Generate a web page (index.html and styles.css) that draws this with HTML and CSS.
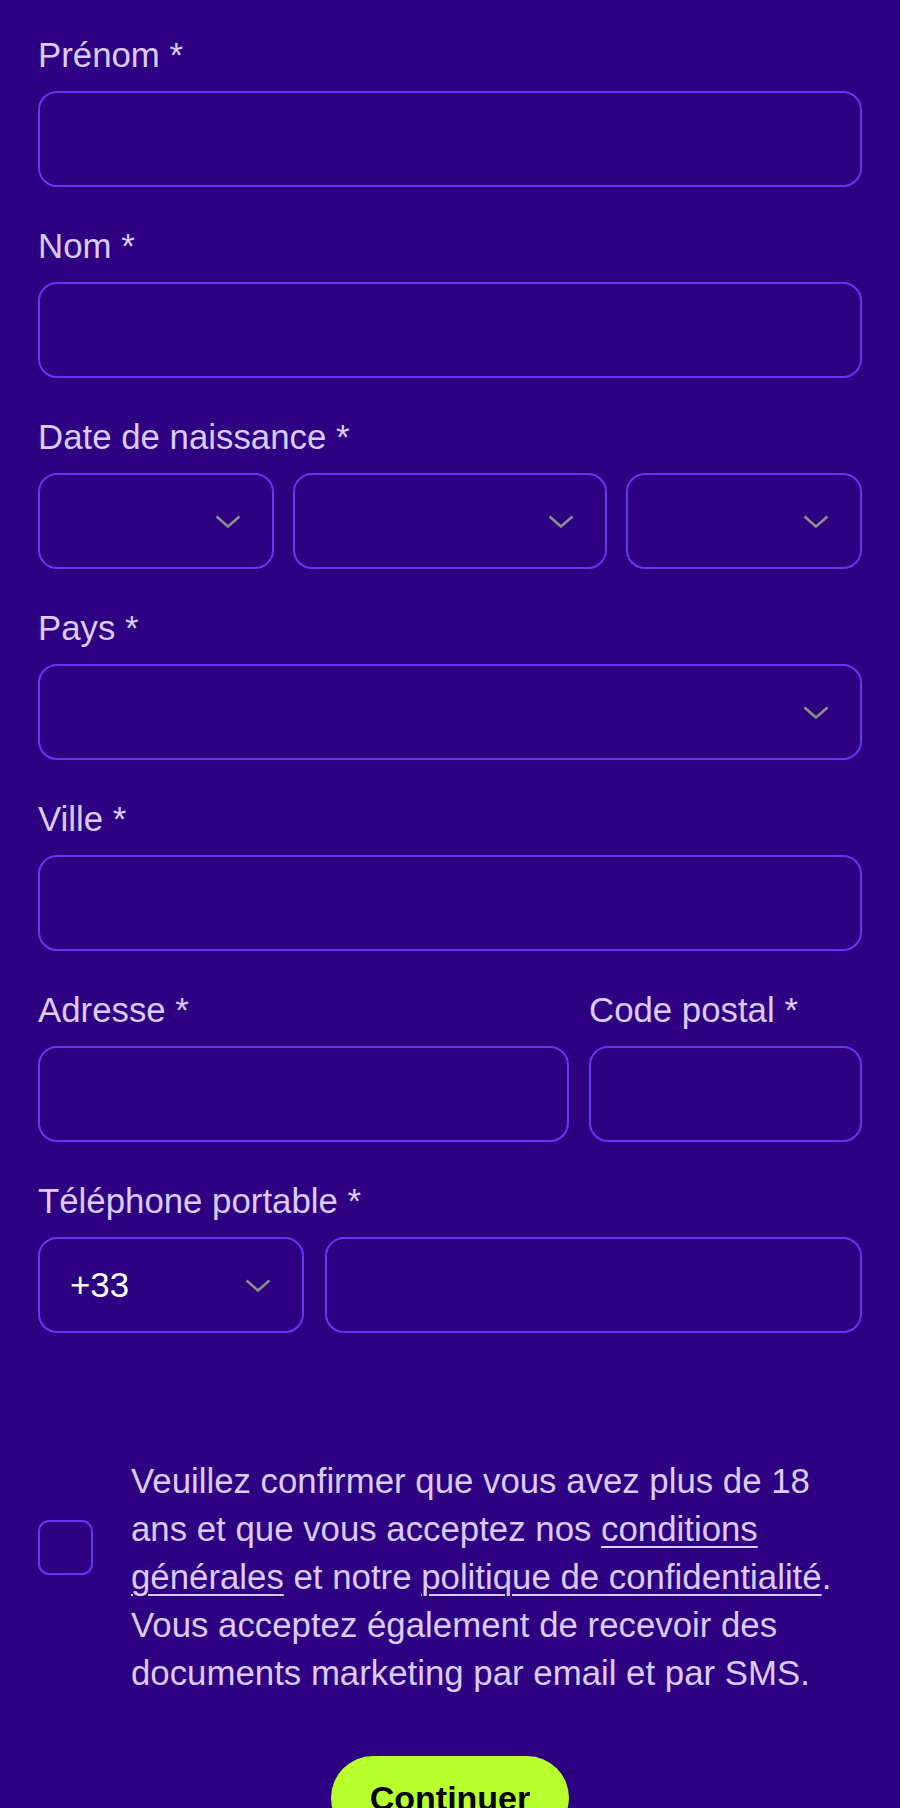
FILE: index.html
```html
<!DOCTYPE html>
<html lang="fr">

<head>
    <meta charset="utf-8">
    <title>Inscription</title>
    <link rel="stylesheet" href="styles.css">
</head>

<body>
    <form class="signup">
        <div class="field">
            <label class="label">Prénom *</label>
            <input class="input" type="text">
        </div>

        <div class="field">
            <label class="label">Nom *</label>
            <input class="input" type="text">
        </div>

        <div class="field">
            <label class="label">Date de naissance *</label>
            <div class="row row-date">
                <div class="select">
                    <svg class="chevron" viewBox="0 0 26 13"><polyline points="1.5,1.5 13,11.5 24.5,1.5" /></svg>
                </div>
                <div class="select">
                    <svg class="chevron" viewBox="0 0 26 13"><polyline points="1.5,1.5 13,11.5 24.5,1.5" /></svg>
                </div>
                <div class="select">
                    <svg class="chevron" viewBox="0 0 26 13"><polyline points="1.5,1.5 13,11.5 24.5,1.5" /></svg>
                </div>
            </div>
        </div>

        <div class="field">
            <label class="label">Pays *</label>
            <div class="select">
                <svg class="chevron" viewBox="0 0 26 13"><polyline points="1.5,1.5 13,11.5 24.5,1.5" /></svg>
            </div>
        </div>

        <div class="field">
            <label class="label">Ville *</label>
            <input class="input" type="text">
        </div>

        <div class="row row-address">
            <div class="field">
                <label class="label">Adresse *</label>
                <input class="input" type="text">
            </div>
            <div class="field">
                <label class="label">Code postal *</label>
                <input class="input" type="text">
            </div>
        </div>

        <div class="field">
            <label class="label">Téléphone portable *</label>
            <div class="row row-phone">
                <div class="select">
                    <span class="select-value">+33</span>
                    <svg class="chevron" viewBox="0 0 26 13"><polyline points="1.5,1.5 13,11.5 24.5,1.5" /></svg>
                </div>
                <input class="input" type="tel">
            </div>
        </div>

        <div class="consent">
            <span class="checkbox"></span>
            <p class="consent-text">
                Veuillez confirmer que vous avez plus de 18 ans et que vous acceptez nos
                <a href="#">conditions générales</a> et notre <a href="#">politique de confidentialité</a>.
                Vous acceptez également de recevoir des documents marketing par email et par SMS.
            </p>
        </div>

        <div class="actions">
            <button class="btn" type="button">Continuer</button>
        </div>
    </form>
</body>

</html>
```

FILE: styles.css
```css
* {
    box-sizing: border-box;
}

body {
    margin: 0;
    background: #2c0080;
    font-family: "Liberation Sans", Arial, sans-serif;
    color: #dccbff;
}

.signup {
    padding: 33px 38px 0;
}

.field {
    margin-bottom: 37px;
}

.label {
    display: block;
    font-size: 34.8px;
    line-height: 43px;
    margin-bottom: 15px;
    color: #dccbff;
}

.input,
.select {
    display: block;
    width: 100%;
    height: 96px;
    border: 2.5px solid #6b33f4;
    border-radius: 19px;
    background: transparent;
    color: #fff;
    font: inherit;
}

.select {
    display: flex;
    align-items: center;
    justify-content: space-between;
    padding: 0 31px 0 30px;
}

.select .chevron {
    width: 26px;
    height: 13px;
    margin-left: auto;
    fill: none;
    stroke: #8c8c8c;
    stroke-width: 2.6;
}

.select-value {
    font-size: 34.8px;
    color: #fff;
}

.row {
    display: grid;
    gap: 19px;
}

.row-date {
    grid-template-columns: 3fr 4fr 3fr;
}

.row-address {
    grid-template-columns: 1fr 273px;
    gap: 20px;
}

.row-phone {
    grid-template-columns: 266px 1fr;
    gap: 21px;
}

.consent {
    display: flex;
    align-items: flex-start;
    gap: 38px;
    margin-top: 124px;
}

.checkbox {
    flex: none;
    width: 55px;
    height: 55px;
    margin-top: 63px;
    border: 2.5px solid #6b33f4;
    border-radius: 11px;
}

.consent-text {
    max-width: 720px;
    margin: 0;
    font-size: 34.8px;
    line-height: 48px;
}

.consent-text a {
    color: inherit;
    text-decoration: underline;
    text-underline-offset: 5px;
    text-decoration-thickness: 2px;
}

.actions {
    display: flex;
    justify-content: center;
    margin-top: 59px;
}

.btn {
    height: 84px;
    padding: 0 39px;
    border: none;
    border-radius: 42px;
    background: #b8ff2e;
    color: #000;
    font-family: "Liberation Sans", Arial, sans-serif;
    font-size: 34px;
    font-weight: 700;
}
```
